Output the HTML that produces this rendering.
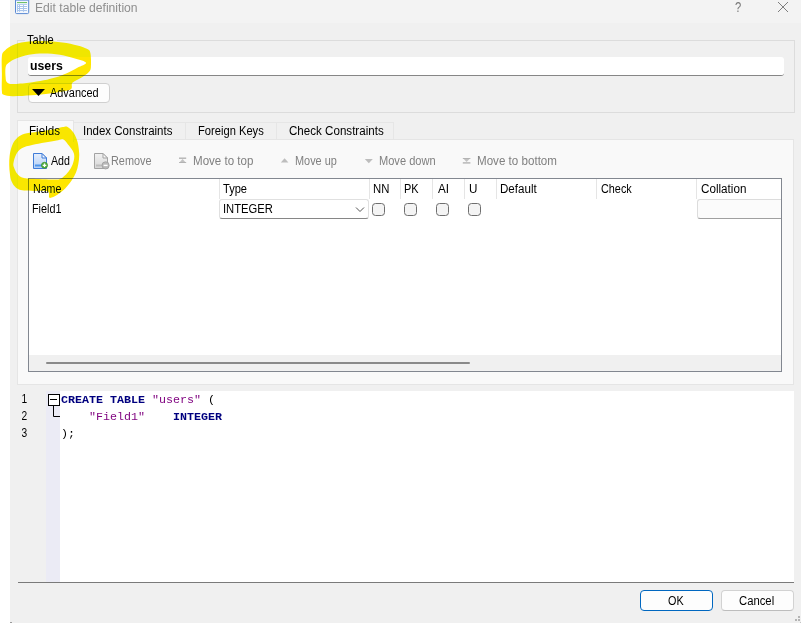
<!DOCTYPE html>
<html lang="en">
<head>
<meta charset="utf-8">
<title>Edit table definition</title>
<style>
html,body{margin:0;padding:0;}
body{width:801px;height:623px;overflow:hidden;background:#fff;position:relative;
  font-family:"Liberation Sans","Noto Sans CJK JP",sans-serif;font-size:12px;color:#000;}
.abs,.t,.box{position:absolute;}
.t{white-space:nowrap;transform-origin:0 50%;line-height:14px;height:14px;font-size:12px;}
.g{color:#808080;}
#dlg{position:absolute;left:10px;top:0;width:791px;height:623px;background:#f0f0f0;}
#titlebar{position:absolute;left:10px;top:0;width:791px;height:23px;background:#f3f3f3;}
.sep{position:absolute;top:179px;width:1px;height:20px;background:#e5e5e5;}
.cb{position:absolute;top:203px;width:11px;height:11px;border:1px solid #6e6e6e;border-radius:3.5px;background:#f4f4f4;}
.code{position:absolute;white-space:pre;font-family:"Liberation Mono",monospace;font-size:11.67px;line-height:17px;height:17px;left:61px;}
.kw{color:#00007f;font-weight:bold;}
.str{color:#7f007f;}
.ln{position:absolute;left:21px;transform:scaleX(0.85);font-size:12px;line-height:17px;height:17px;}
</style>
</head>
<body>
<div id="dlg"></div>
<div id="titlebar"></div>

<!-- title icon -->
<svg class="abs" style="left:15px;top:0" width="15" height="15" viewBox="0 0 15 15">
  <rect x="0.5" y="-2" width="13.2" height="15.6" rx="1.2" fill="#f3f7fe" stroke="#5b8ad2"/>
  <rect x="1" y="0" width="12.2" height="0.8" fill="#7fa6e0"/>
  <rect x="2" y="2" width="10" height="1.1" fill="#6fc06a"/>
  <rect x="2" y="4.2" width="10" height="7.6" fill="#a9c5eb"/>
  <g fill="#fff">
    <rect x="3" y="5" width="1" height="1"/><rect x="5" y="5" width="3" height="1"/><rect x="9" y="5" width="3" height="1"/>
    <rect x="3" y="7" width="1" height="1"/><rect x="5" y="7" width="3" height="1"/><rect x="9" y="7" width="3" height="1"/>
    <rect x="3" y="9" width="1" height="1"/><rect x="5" y="9" width="3" height="1"/><rect x="9" y="9" width="3" height="1"/>
    <rect x="3" y="11" width="1" height="0.8"/><rect x="5" y="11" width="3" height="0.8"/><rect x="9" y="11" width="3" height="0.8"/>
  </g>
</svg>
<div class="t" style="left:34.8px;top:1px;color:#8e8e8e;font-size:12px;transform:scaleX(1.012);">Edit table definition</div>
<div class="t" style="left:733px;top:0px;color:#777;font-size:14px;width:10px;text-align:center;transform-origin:50% 50%;transform:scaleX(0.8);">?</div>
<svg class="abs" style="left:776px;top:0" width="14" height="14" viewBox="0 0 14 14"><path d="M2 2 L12 12 M12 2 L2 12" stroke="#707070" stroke-width="0.9" fill="none"/></svg>

<!-- group box -->
<div class="box" style="left:17px;top:40px;width:776px;height:71px;border:1px solid #dcdcdc;"></div>
<div class="box" style="left:25px;top:36px;width:32px;height:8px;background:#f0f0f0;"></div>
<div class="t" style="left:27px;top:33px;transform:scaleX(0.93);">Table</div>
<div class="box" style="left:28px;top:57px;width:756px;height:18px;background:#fff;border-bottom:1px solid #868686;border-radius:3px;"></div>
<div class="t" style="left:29.5px;top:59px;font-weight:bold;transform:scaleX(1.022);">users</div>
<div class="box" style="left:28px;top:83px;width:80px;height:18px;background:#fdfdfd;border:1px solid #d0d0d0;border-radius:4px;"></div>
<svg class="abs" style="left:32px;top:89px" width="13" height="7" viewBox="0 0 13 7"><path d="M0 0 H13 L6.5 7 Z" fill="#000"/></svg>
<div class="t" style="left:49.8px;top:86px;transform:scaleX(0.911);">Advanced</div>

<!-- tabs -->
<div class="box" style="left:73px;top:122px;width:320px;height:17px;background:#f0f0f0;border:1px solid #e6e6e6;border-left:none;"></div>
<div class="box" style="left:185px;top:123px;width:1px;height:16px;background:#e6e6e6;"></div>
<div class="box" style="left:276px;top:123px;width:1px;height:16px;background:#e6e6e6;"></div>
<div class="box" style="left:17px;top:139px;width:775px;height:244px;background:#f9f9f9;border:1px solid #e5e5e5;"></div>
<div class="box" style="left:17px;top:120px;width:55px;height:21px;background:#f9f9f9;border:1px solid #e5e5e5;border-bottom:none;"></div>
<div class="t" style="left:28.5px;top:124px;transform:scaleX(0.968);">Fields</div>
<div class="t" style="left:82.7px;top:124px;transform:scaleX(0.958);">Index Constraints</div>
<div class="t" style="left:197.8px;top:124px;transform:scaleX(0.93);">Foreign Keys</div>
<div class="t" style="left:288.5px;top:124px;transform:scaleX(0.966);">Check Constraints</div>

<!-- toolbar -->
<div class="t" style="left:50.8px;top:154px;transform:scaleX(0.886);">Add</div>
<div class="t g" style="left:111.1px;top:154px;transform:scaleX(0.907);">Remove</div>
<div class="t g" style="left:193.2px;top:154px;transform:scaleX(0.964);">Move to top</div>
<div class="t g" style="left:294.9px;top:154px;transform:scaleX(0.909);">Move up</div>
<div class="t g" style="left:378.8px;top:154px;transform:scaleX(0.922);">Move down</div>
<div class="t g" style="left:476.7px;top:154px;transform:scaleX(0.967);">Move to bottom</div>

<!-- toolbar icons -->
<svg class="abs" style="left:32px;top:152px" width="17" height="18" viewBox="0 0 17 18">
  <defs><linearGradient id="pg" x1="0" y1="0" x2="0" y2="1"><stop offset="0" stop-color="#e6effd"/><stop offset="1" stop-color="#b2cef5"/></linearGradient></defs>
  <path d="M1.5 1.5 H10 L14.5 6 V16.5 H1.5 Z" fill="url(#pg)" stroke="#3f7cd8"/>
  <path d="M10 1.5 V6 H14.5 Z" fill="#f4f8fe" stroke="#3f7cd8" stroke-linejoin="round"/>
  <rect x="3" y="12.5" width="8" height="2" fill="#4f95ea"/>
  <circle cx="12.5" cy="13.3" r="3.0" fill="#55b043" stroke="#3a922b" stroke-width="0.8"/>
  <path d="M10.7 13.3 H14.3 M12.5 11.5 V15.1" stroke="#fff" stroke-width="1.3"/>
</svg>
<svg class="abs" style="left:93px;top:152px" width="17" height="18" viewBox="0 0 17 18">
  <defs><linearGradient id="pg2" x1="0" y1="0" x2="0" y2="1"><stop offset="0" stop-color="#f2f2f2"/><stop offset="1" stop-color="#d6d6d6"/></linearGradient></defs>
  <path d="M1.5 1.5 H10 L14.5 6 V16.5 H1.5 Z" fill="url(#pg2)" stroke="#a3a3a3"/>
  <path d="M10 1.5 V6 H14.5 Z" fill="#f8f8f8" stroke="#a3a3a3" stroke-linejoin="round"/>
  <rect x="3" y="12.5" width="8" height="2" fill="#bdbdbd"/>
  <circle cx="12.6" cy="13.4" r="3.6" fill="#b9b9b9" stroke="#9d9d9d" stroke-width="0.8"/>
  <path d="M10.6 13.4 H14.6" stroke="#fff" stroke-width="1.4"/>
</svg>
<svg class="abs" style="left:178px;top:156px" width="10" height="9" viewBox="0 0 10 9"><rect x="1" y="1.5" width="7.2" height="1.4" fill="#b3b3b3"/><path d="M4.6 3 L8.2 7 H1 Z" fill="#c2c2c2"/><rect x="1" y="6.2" width="7.2" height="0.8" fill="#b0b0b0"/></svg>
<svg class="abs" style="left:280px;top:157px" width="10" height="7" viewBox="0 0 10 7"><path d="M4.6 1.2 L8.4 5.4 H0.8 Z" fill="#bdbdbd"/></svg>
<svg class="abs" style="left:364px;top:158px" width="10" height="7" viewBox="0 0 10 7"><path d="M0.8 1 H8.8 L4.8 5.2 Z" fill="#bdbdbd"/></svg>
<svg class="abs" style="left:462px;top:156px" width="10" height="9" viewBox="0 0 10 9"><path d="M0.8 2 H8.4 L4.6 6 Z" fill="#c2c2c2"/><rect x="0.8" y="2" width="7.6" height="0.8" fill="#b0b0b0"/><rect x="0.8" y="6.2" width="7.6" height="1.4" fill="#b3b3b3"/></svg>

<!-- table widget -->
<div class="box" style="left:28px;top:178px;width:752px;height:192px;background:#fff;border:1px solid #828790;"></div>
<div class="box" style="left:29px;top:355px;width:752px;height:16px;background:#f0f0f0;"></div>
<div class="box" style="left:46px;top:362px;width:424px;height:2px;background:#8a8a8a;border-radius:1px;"></div>
<div class="sep" style="left:219px"></div><div class="sep" style="left:369px"></div><div class="sep" style="left:400px"></div>
<div class="sep" style="left:432px"></div><div class="sep" style="left:464px"></div><div class="sep" style="left:496px"></div>
<div class="sep" style="left:596px"></div><div class="sep" style="left:696px"></div>
<div class="t" style="left:32.9px;top:182px;transform:scaleX(0.887);">Name</div>
<div class="t" style="left:223.0px;top:182px;transform:scaleX(0.923);">Type</div>
<div class="t" style="left:372.8px;top:182px;transform:scaleX(0.944);">NN</div>
<div class="t" style="left:404.4px;top:182px;transform:scaleX(0.913);">PK</div>
<div class="t" style="left:437.7px;top:182px;transform:scaleX(0.973);">AI</div>
<div class="t" style="left:468.9px;top:182px;transform:scaleX(0.971);">U</div>
<div class="t" style="left:500.4px;top:182px;transform:scaleX(0.965);">Default</div>
<div class="t" style="left:600.5px;top:182px;transform:scaleX(0.903);">Check</div>
<div class="t" style="left:700.6px;top:182px;transform:scaleX(0.972);">Collation</div>
<div class="t" style="left:31.9px;top:202px;transform:scaleX(0.903);">Field1</div>
<div class="box" style="left:219px;top:199px;width:148px;height:18px;background:#fff;border:1px solid #e0e0e0;border-bottom:1px solid #868686;border-radius:3px;"></div>
<div class="t" style="left:222.5px;top:202px;transform:scaleX(0.935);">INTEGER</div>
<svg class="abs" style="left:355px;top:206px" width="10" height="7" viewBox="0 0 10 7"><path d="M1 1.5 L5 5.5 L9 1.5" stroke="#555" stroke-width="1" fill="none"/></svg>
<div class="cb" style="left:372px"></div><div class="cb" style="left:404px"></div><div class="cb" style="left:436px"></div><div class="cb" style="left:468px"></div>
<div class="box" style="left:697px;top:199px;width:83px;height:18px;background:#fbfbfb;border:1px solid #dcdcdc;border-right:none;border-bottom:1px solid #a0a0a0;border-radius:3px 0 0 3px;"></div>

<!-- code editor -->
<div class="box" style="left:18px;top:391px;width:776px;height:191px;background:#fff;"></div>
<div class="box" style="left:18px;top:391px;width:28px;height:191px;background:#f0f0f0;"></div>
<div class="box" style="left:46px;top:391px;width:14px;height:191px;background:#ebebf5;"></div>
<div class="box" style="left:18px;top:582px;width:776px;height:1px;background:#7a7a7a;"></div>
<div class="ln" style="top:391px">1</div><div class="ln" style="top:408px">2</div><div class="ln" style="top:425px">3</div>
<svg class="abs" style="left:46px;top:391px" width="15" height="34" viewBox="0 0 15 34"><rect x="2.5" y="3.5" width="11" height="11" fill="#fff" stroke="#000"/><path d="M4 8.5 H11 M7.5 15 V25.5 H14" stroke="#000" fill="none"/></svg>
<div class="code" style="top:392px"><span class="kw">CREATE TABLE</span> <span class="str">"users"</span> (</div>
<div class="code" style="top:409px">    <span class="str">"Field1"</span>    <span class="kw">INTEGER</span></div>
<div class="code" style="top:426px">);</div>

<!-- buttons -->
<div class="box" style="left:640px;top:590px;width:71px;height:19px;background:#fdfdfd;border:1px solid #0067c0;border-radius:4px;"></div>
<div class="t" style="left:668px;top:594px;transform:scaleX(0.9);">OK</div>
<div class="box" style="left:721px;top:590px;width:71px;height:19px;background:#fdfdfd;border:1px solid #d2d2d2;border-bottom-color:#bdbdbd;border-radius:4px;"></div>
<div class="t" style="left:739px;top:594px;transform:scaleX(0.941);">Cancel</div>

<div class="box" style="left:10px;top:622px;width:2px;height:1px;background:#9a9a9a;"></div>
<!-- size grip -->
<svg class="abs" style="left:794px;top:615px" width="7" height="8" viewBox="0 0 7 8"><g fill="#b4b4b4"><rect x="4" y="1" width="2" height="2"/><rect x="1" y="4" width="2" height="2"/><rect x="4" y="4" width="2" height="2"/></g><rect x="6" y="7" width="1" height="1" fill="#c4c4c4"/></svg>
<!-- hand-drawn highlighter annotations -->
<svg class="abs" style="left:0;top:0;mix-blend-mode:darken" width="100" height="200" viewBox="0 0 100 200">
<path fill="#ffe600" fill-rule="evenodd" d="M1.9 56.0 C2.4 52.1 3.2 52.2 5.0 50.4 C6.8 48.6 9.2 46.6 12.5 45.2 C15.8 43.8 19.8 42.7 25.0 42.0 C30.2 41.3 37.5 40.9 43.7 41.0 C49.9 41.1 56.8 41.7 62.4 42.4 C68.0 43.1 73.2 44.3 77.4 45.4 C81.6 46.5 85.2 47.8 87.4 49.1 C89.6 50.5 89.9 50.5 90.5 53.5 C91.1 56.5 91.2 64.1 90.9 67.2 C90.6 70.3 90.2 70.4 88.6 72.2 C87.0 74.0 83.8 76.0 81.1 77.8 C78.4 79.6 74.1 80.9 72.4 82.8 C70.8 84.7 72.9 87.5 71.2 89.0 C69.5 90.5 66.0 90.8 62.4 91.5 C58.8 92.2 55.1 92.8 49.9 93.4 C44.7 94.0 37.4 94.8 31.2 95.3 C25.0 95.8 17.1 96.3 12.5 96.2 C7.9 96.1 5.5 95.6 3.7 94.7 C1.9 93.8 2.2 94.4 1.9 90.9 C1.6 87.4 1.9 79.3 1.9 73.5 C1.9 67.7 1.4 59.9 1.9 56.0Z M5.6 67.2 C6.1 64.8 6.9 64.2 8.7 62.8 C10.5 61.3 12.9 59.9 16.2 58.5 C19.5 57.1 24.1 55.5 28.7 54.7 C33.3 53.9 38.5 53.5 43.7 53.5 C48.9 53.5 54.7 53.9 59.9 54.7 C65.1 55.5 70.5 57.1 74.9 58.5 C79.3 59.9 85.7 61.2 86.1 62.8 C86.5 64.3 80.7 66.0 77.4 67.8 C74.1 69.6 69.7 71.9 66.2 73.5 C62.7 75.1 60.0 76.1 56.2 77.2 C52.5 78.3 48.3 79.4 43.7 80.3 C39.1 81.2 33.9 82.2 28.7 82.8 C23.5 83.4 16.1 84.2 12.5 84.1 C8.9 84.0 8.1 83.3 6.9 82.2 C5.8 81.1 5.8 79.7 5.6 77.2 C5.4 74.7 5.1 69.6 5.6 67.2Z"/>
<path fill="#ffe600" fill-rule="evenodd" d="M67.6 127.0 C69.4 128.0 71.9 130.3 73.6 132.8 C75.2 135.3 76.6 138.4 77.5 141.8 C78.4 145.2 79.0 149.8 79.2 153.4 C79.4 157.0 78.9 160.4 78.4 163.6 C77.9 166.8 77.1 169.8 76.0 172.6 C74.9 175.4 73.4 177.9 71.6 180.6 C69.8 183.3 67.6 186.2 65.2 188.6 C62.8 191.0 59.6 193.5 57.0 195.0 C54.4 196.5 51.0 198.3 49.6 197.8 C48.2 197.3 49.8 193.2 48.6 192.0 C47.4 190.8 44.9 191.0 42.4 190.8 C39.9 190.6 36.8 191.0 33.7 190.9 C30.6 190.8 26.6 190.8 24.0 190.5 C21.4 190.2 20.0 190.0 18.4 189.3 C16.8 188.6 15.6 187.6 14.4 186.1 C13.2 184.6 12.0 182.7 11.2 180.5 C10.4 178.3 10.1 175.6 9.8 173.0 C9.5 170.4 9.2 167.8 9.2 164.9 C9.2 162.1 9.2 158.9 9.6 155.9 C10.0 152.9 10.7 149.6 11.6 147.0 C12.5 144.4 13.3 142.4 14.8 140.5 C16.3 138.6 18.1 136.7 20.5 135.4 C22.9 134.1 25.9 133.6 29.5 132.8 C33.1 132.1 38.1 131.5 42.4 130.9 C46.7 130.3 51.8 129.6 55.2 129.0 C58.6 128.4 60.8 127.4 62.9 127.1 C65.0 126.8 65.8 126.0 67.6 127.0Z M13.4 163.6 C13.7 161.3 14.6 157.3 16.0 154.7 C17.4 152.1 19.1 149.8 21.8 148.2 C24.5 146.6 28.2 145.9 32.1 145.0 C36.0 144.1 40.8 143.2 44.9 142.5 C49.0 141.8 53.5 141.0 56.5 140.5 C59.5 140.0 61.0 138.7 62.9 139.3 C64.8 140.0 66.4 142.5 68.0 144.4 C69.6 146.3 71.7 148.8 72.7 150.8 C73.8 152.8 74.3 154.2 74.3 156.5 C74.3 158.8 73.5 162.1 72.6 164.5 C71.7 166.9 70.4 169.1 68.8 171.2 C67.2 173.3 64.9 175.6 63.2 177.0 C61.5 178.4 60.8 179.0 58.4 179.4 C56.0 179.8 52.5 179.5 48.8 179.4 C45.0 179.3 39.4 179.1 35.9 179.0 C32.4 178.9 30.0 178.8 28.0 178.6 C26.0 178.4 25.3 178.4 24.0 178.1 C22.7 177.8 21.2 177.3 20.0 176.5 C18.8 175.7 17.7 174.7 16.8 173.3 C15.9 172.0 15.0 170.0 14.4 168.4 C13.8 166.8 13.1 165.9 13.4 163.6Z"/>
</svg>
</body>
</html>
